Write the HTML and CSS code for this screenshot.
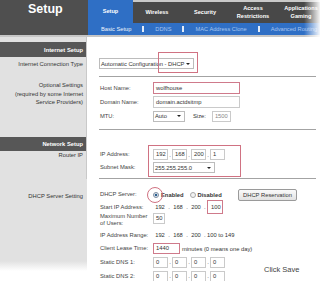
FILE: index.html
```html
<!DOCTYPE html>
<html>
<head>
<meta charset="utf-8">
<link rel="stylesheet" href="styles.css">
</head>
<body>
<div class="header">
  <div class="brand">Setup</div>
  <div class="nav">
    <div class="tabs">
      <div class="tab active">Setup</div>
      <div class="tab">Wireless</div>
      <div class="tab">Security</div>
      <div class="tab">Access<br>Restrictions</div>
      <div class="tab">Applications<br>Gaming</div>
    </div>
    <div class="subtabs">
      <span class="sub cur">Basic Setup</span><span class="sep"></span>
      <span class="sub">DDNS</span><span class="sep"></span>
      <span class="sub">MAC Address Clone</span><span class="sep"></span>
      <span class="sub">Advanced Routing</span>
    </div>
  </div>
</div>

<div class="main">
  <div class="side s1">
    <div class="bar b1">Internet Setup</div>
    <div class="label l1">Internet Connection Type</div>
  </div>
  <div class="pane p1">
    <div class="sel sel-conn"><span>Automatic Configuration - DHCP</span><i class="arrow"></i></div>
  </div>

  <div class="side s2">
    <div class="label l2">Optional Settings<br>(required by some Internet<br>Service Providers)</div>
  </div>
  <div class="pane p2">
    <div class="row r14"><span class="flabel">Host Name:</span><span class="inp red w87">wolfhouse</span></div>
    <div class="row r14"><span class="flabel">Domain Name:</span><span class="inp w87">domain.actdsitmp</span></div>
    <div class="row r14"><span class="flabel">MTU:</span><span class="sel sel-mtu"><span>Auto</span><i class="arrow"></i></span><span class="size-l">Size:</span><span class="inp size-v">1500</span></div>
  </div>

  <div class="side s3">
    <div class="bar b3">Network Setup</div>
    <div class="label l3">Router IP</div>
  </div>
  <div class="pane p3">
    <div class="row r13"><span class="flabel">IP Address:</span><span class="inp oct">192</span><span class="dot">.</span><span class="inp oct">168</span><span class="dot">.</span><span class="inp oct">200</span><span class="dot">.</span><span class="inp oct">1</span></div>
    <div class="row r13"><span class="flabel">Subnet Mask:</span><span class="sel sel-mask"><span>255.255.255.0</span><i class="arrow"></i></span></div>
  </div>

  <div class="side s4">
    <div class="label l4">DHCP Server Setting</div>
  </div>
  <div class="pane p4">
    <div class="row r13"><span class="flabel">DHCP Server:</span><span class="radio on"></span><b class="rlab">Enabled</b><span class="radio"></span><b class="rlab">Disabled</b><span class="btn">DHCP Reservation</span></div>
    <div class="row r12"><span class="flabel">Start IP Address:</span><span class="toct">192</span><span class="dot">.</span><span class="toct">168</span><span class="dot">.</span><span class="toct">200</span><span class="dot short">.</span><span class="inp oct red last">100</span></div>
    <div class="row r15 top"><span class="flabel">Maximum Number<br>of Users:</span><span class="inp users">50</span></div>
    <div class="row r14"><span class="flabel">IP Address Range:</span><span class="toct">192</span><span class="dot">.</span><span class="toct">168</span><span class="dot">.</span><span class="toct">200</span><span class="dot short">.</span><span class="range">100 to 149</span></div>
    <div class="row r13"><span class="flabel">Client Lease Time:</span><span class="inp red lease">1440</span><span class="mins">minutes (0 means one day)</span></div>
    <div class="dns">
      <div class="dns-rows">
        <div class="row r14"><span class="flabel">Static DNS 1:</span><span class="inp oct">0</span><span class="dot">.</span><span class="inp oct">0</span><span class="dot">.</span><span class="inp oct">0</span><span class="dot">.</span><span class="inp oct">0</span></div>
        <div class="row r14"><span class="flabel">Static DNS 2:</span><span class="inp oct">0</span><span class="dot">.</span><span class="inp oct">0</span><span class="dot">.</span><span class="inp oct">0</span><span class="dot">.</span><span class="inp oct">0</span></div>
      </div>
      <div class="save">Click Save</div>
    </div>
  </div>
</div>

<div class="fade"></div>
<div class="mark m-conn"></div>
<div class="mark m-router"></div>
<div class="mark m-radio"></div>
</body>
</html>
```

FILE: styles.css
```css
body {
  margin: 0;
  width: 320px;
  height: 281px;
  overflow: hidden;
  background: #fff;
  font-family: "Liberation Sans", Arial, sans-serif;
  font-size: 5.8px;
  color: #333;
  position: relative;
}

/* header */
.header {
  display: flex;
  height: 35px;
  background: #4f4f4f;
  border-bottom: 2px solid #c6c6c6;
}
.brand {
  width: 88px;
  flex: none;
  box-sizing: border-box;
  padding: 2px 0 0 28px;
  color: #fff;
  font-weight: bold;
  font-size: 12.5px;
  line-height: 15px;
}
.nav {
  flex: 1;
  min-width: 0;
  display: flex;
  flex-direction: column;
}
.tabs {
  display: flex;
  height: 23px;
}
.tab {
  width: 48px;
  flex: none;
  box-sizing: border-box;
  display: flex;
  align-items: center;
  justify-content: center;
  text-align: center;
  color: #fff;
  font-weight: bold;
  font-size: 5.6px;
  line-height: 7.5px;
  background: #484848;
  border-top: 2px solid #c9c9c9;
}
.tab.active {
  width: 45px;
  background: #2f6fc5;
  border-top: none;
}
.subtabs {
  height: 12px;
  background: #2f6fc5;
  display: flex;
  align-items: center;
  gap: 11px;
  padding-left: 13px;
  font-size: 5.7px;
  color: #a7c5ee;
  white-space: nowrap;
}
.sub.cur { color: #f0f5fc; }
.sep {
  width: 2px;
  height: 6px;
  background: #e3ecf8;
  flex: none;
}
.fade {
  position: absolute;
  top: 0;
  right: 0;
  width: 16px;
  height: 38px;
  background: linear-gradient(to right, rgba(255,255,255,0), rgba(255,255,255,0.95));
}

/* main grid */
.main {
  display: grid;
  grid-template-columns: 87px 1fr;
}
.side {
  background: #e1e1e1;
  border-right: 1px solid #c9c9c9;
}
.bar {
  background: #575757;
  color: #fff;
  font-weight: bold;
  display: flex;
  align-items: center;
  justify-content: flex-end;
  padding-right: 3px;
}
.label {
  text-align: right;
  padding-right: 3px;
  line-height: 8px;
  color: #333;
}
.s1 { padding-top: 5px; }
.b1 { height: 15px; }
.l1 { padding-top: 3px; }
.s2 { padding-top: 4px; }
.l2 { line-height: 8.5px; }
.s3 { padding-top: 7px; }
.b3 { height: 14px; }
.s4 {
  padding-top: 13px;
  background: linear-gradient(to bottom, #e1e1e1 82px, #fff 92px);
  border-right-color: transparent;
}

.pane {
  margin: 0 4px 0 12px;
  border-bottom: 1px solid #a3a3a3;
}
.p1 { height: 39px; }
.p2 { padding: 4px 0 6px; }
.p3 { padding: 18px 0 4px; }
.p4 { padding-top: 9px; border-bottom: none; }

.row {
  display: flex;
  align-items: center;
  padding-left: 1px;
}
.row.top { align-items: flex-start; }
.r12 { height: 12px; }
.r13 { height: 13px; }
.r14 { height: 14px; }
.r15 { height: 15px; }
.flabel {
  flex: 0 0 53px;
  color: #444;
  line-height: 6.5px;
}

.inp {
  flex: none;
  box-sizing: border-box;
  height: 12px;
  border: 1px solid #cacaca;
  padding: 0 2px;
  line-height: 10px;
  background: #fff;
  color: #333;
  white-space: nowrap;
}
.inp.red { border-color: #cf7a8b; }
.w87 { width: 87px; }
.oct { width: 15px; height: 11px; line-height: 9px; }
.oct.last { width: 16px; height: 14px; line-height: 12px; padding-left: 3px; }
.toct { width: 14px; text-align: center; flex: none; }
.dot { width: 4px; text-align: center; flex: none; }
.dot.short { width: 3px; text-align: left; margin-left: 1px; }
.users { width: 12px; height: 11px; line-height: 9px; margin-top: 0; }
.lease { width: 27px; height: 11px; line-height: 9px; }
.mins { margin-left: 2px; }
.range { margin-left: 0; }
.size-l { margin-left: 8px; }
.size-v { margin-left: 6px; width: 19px; height: 11px; line-height: 9px; color: #888; }

.sel {
  flex: none;
  box-sizing: border-box;
  height: 11px;
  border: 1px solid #bcbcbc;
  background: #fff;
  display: flex;
  align-items: center;
  justify-content: space-between;
  padding: 0 3px 0 1px;
  white-space: nowrap;
}
.sel-conn { width: 95px; margin-top: 21px; }
.sel-mtu { width: 32px; }
.sel-mask { width: 62px; }
.arrow {
  width: 0;
  height: 0;
  border-left: 2px solid transparent;
  border-right: 2px solid transparent;
  border-top: 2.5px solid #222;
}

.radio {
  flex: none;
  width: 6px;
  height: 6px;
  box-sizing: border-box;
  border: 1px solid #a8a8a8;
  border-radius: 50%;
  background: #f2f2f2;
  margin-left: 6px;
}
.radio.on {
  margin-left: 0;
  border-color: #7d8da0;
  background: radial-gradient(circle, #2b5f8f 0 1.4px, #e8eef4 1.6px);
}
.rlab {
  margin-left: 2px;
  color: #333;
}
.btn {
  margin-left: auto;
  margin-right: 19px;
  width: 59px;
  height: 12px;
  box-sizing: border-box;
  border: 1px solid #9a9a9a;
  border-radius: 2px;
  background: linear-gradient(#fafafa, #e2e2e2);
  display: flex;
  align-items: center;
  justify-content: center;
  color: #333;
}

.dns {
  display: flex;
  align-items: center;
}
.save {
  margin-left: 39px;
  font-size: 7.5px;
  color: #444;
}

/* annotation marks */
.mark {
  position: absolute;
  border: 1px solid #d07282;
}
.m-conn { left: 158px; top: 52px; width: 38px; height: 19px; }
.m-router { left: 148px; top: 145px; width: 91px; height: 30px; }
.m-radio { left: 147px; top: 187px; width: 14px; height: 14px; border-radius: 50%; }
```
